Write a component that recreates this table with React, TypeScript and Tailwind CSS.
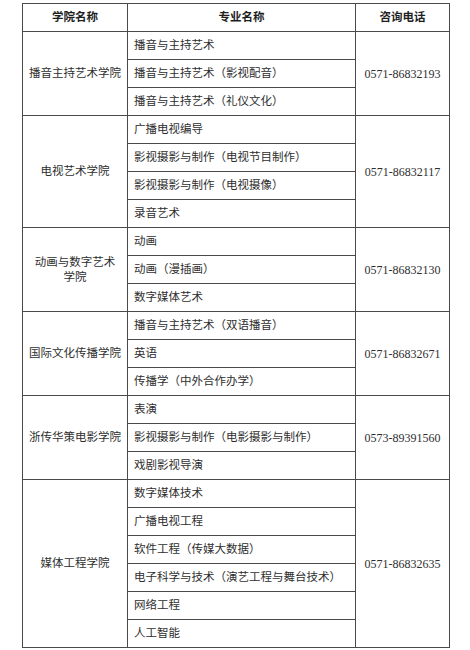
import React from "react";

type Group = { college: React.ReactNode; majors: string[]; phone: string };

const groups: Group[] = [
  {
    college: "播音主持艺术学院",
    majors: ["播音与主持艺术", "播音与主持艺术（影视配音）", "播音与主持艺术（礼仪文化）"],
    phone: "0571-86832193",
  },
  {
    college: "电视艺术学院",
    majors: ["广播电视编导", "影视摄影与制作（电视节目制作）", "影视摄影与制作（电视摄像）", "录音艺术"],
    phone: "0571-86832117",
  },
  {
    college: (
      <>
        动画与数字艺术
        <br />
        学院
      </>
    ),
    majors: ["动画", "动画（漫插画）", "数字媒体艺术"],
    phone: "0571-86832130",
  },
  {
    college: "国际文化传播学院",
    majors: ["播音与主持艺术（双语播音）", "英语", "传播学（中外合作办学）"],
    phone: "0571-86832671",
  },
  {
    college: "浙传华策电影学院",
    majors: ["表演", "影视摄影与制作（电影摄影与制作）", "戏剧影视导演"],
    phone: "0573-89391560",
  },
  {
    college: "媒体工程学院",
    majors: ["数字媒体技术", "广播电视工程", "软件工程（传媒大数据）", "电子科学与技术（演艺工程与舞台技术）", "网络工程", "人工智能"],
    phone: "0571-86832635",
  },
];

const cell = "border border-[#4a4a4a] p-0";

export default function App() {
  return (
    <div
      className="min-h-[650px] w-[470px] bg-white pl-[22px] pt-[3px] text-[11.5px] text-[#2e2e2e]"
      style={{ fontFamily: '"Liberation Serif", "Noto Sans CJK SC", serif' }}
    >
      <table className="w-[427px] table-fixed border-collapse">
        <colgroup>
          <col className="w-[105px]" />
          <col className="w-[228px]" />
          <col className="w-[94px]" />
        </colgroup>
        <thead>
          <tr className="h-[28px] font-bold text-[#1f1f1f]">
            <th className={cell}>学院名称</th>
            <th className={cell}>专业名称</th>
            <th className={cell}>咨询电话</th>
          </tr>
        </thead>
        <tbody>
          {groups.map((g) =>
            g.majors.map((m, i) => (
              <tr key={g.phone + i} className="h-[28px]">
                {i === 0 && (
                  <td rowSpan={g.majors.length} className={cell + " px-1 text-center leading-[15px]"}>
                    {g.college}
                  </td>
                )}
                <td className={cell + " whitespace-nowrap pl-[6px]"}>{m}</td>
                {i === 0 && (
                  <td rowSpan={g.majors.length} className={cell + " text-center text-[12px]"}>
                    {g.phone}
                  </td>
                )}
              </tr>
            ))
          )}
        </tbody>
      </table>
    </div>
  );
}
